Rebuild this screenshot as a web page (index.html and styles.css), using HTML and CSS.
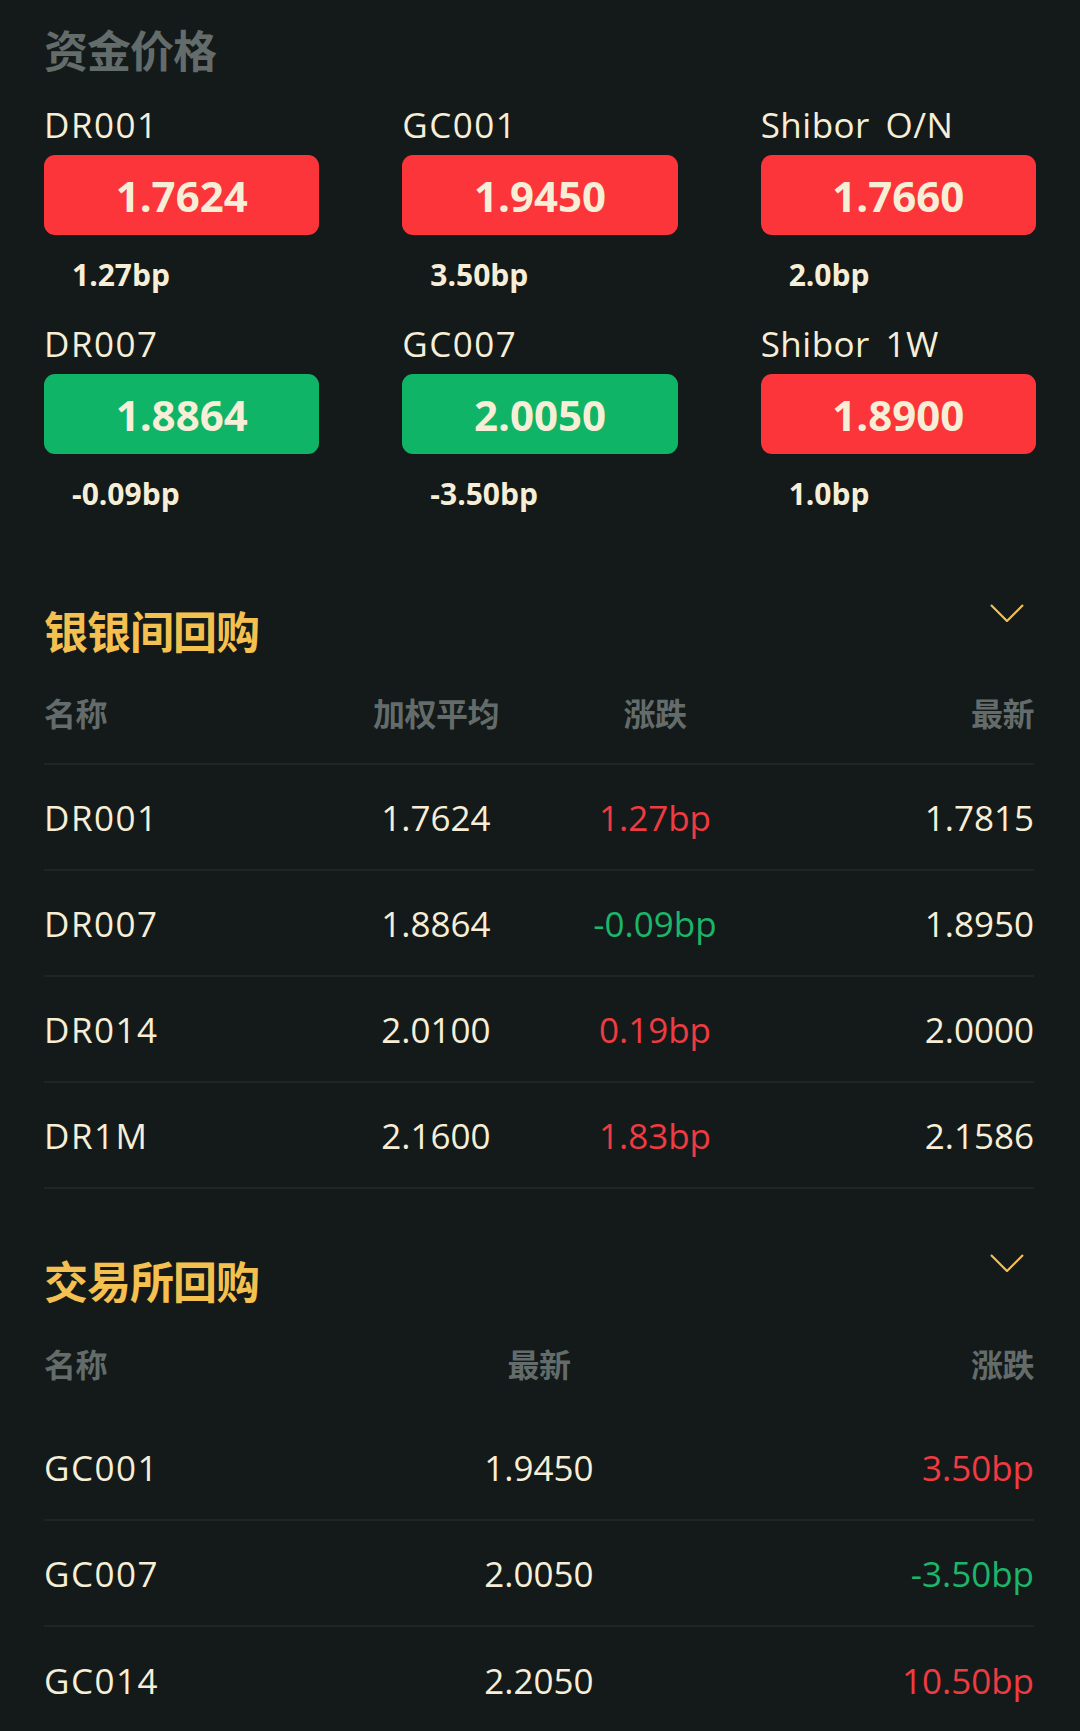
FILE: index.html
```html
<!DOCTYPE html>
<html lang="zh-CN">
<head>
    <meta charset="UTF-8">
    <meta name="viewport" content="width=device-width, initial-scale=1.0">
    <title>资金价格</title>
    <link rel="stylesheet" href="styles.css">
</head>
<body>
    <div class="page">
        <h2 class="section-title muted">资金价格</h2>

        <div class="rates">
            <div class="rate">
                <div class="rate-name">DR001</div>
                <div class="rate-box up">1.7624</div>
                <div class="rate-change">1.27bp</div>
            </div>
            <div class="rate">
                <div class="rate-name">GC001</div>
                <div class="rate-box up">1.9450</div>
                <div class="rate-change">3.50bp</div>
            </div>
            <div class="rate">
                <div class="rate-name wide">Shibor O/N</div>
                <div class="rate-box up">1.7660</div>
                <div class="rate-change">2.0bp</div>
            </div>
            <div class="rate">
                <div class="rate-name">DR007</div>
                <div class="rate-box down">1.8864</div>
                <div class="rate-change">-0.09bp</div>
            </div>
            <div class="rate">
                <div class="rate-name">GC007</div>
                <div class="rate-box down">2.0050</div>
                <div class="rate-change">-3.50bp</div>
            </div>
            <div class="rate">
                <div class="rate-name wide">Shibor 1W</div>
                <div class="rate-box up">1.8900</div>
                <div class="rate-change">1.0bp</div>
            </div>
        </div>

        <div class="section interbank">
            <div class="section-head">
                <h2 class="section-title gold">银银间回购</h2>
                <svg class="chevron" width="34" height="18" viewBox="0 0 34 18">
                    <polyline points="1,1 17,17 33,1" fill="none" stroke="#f2bf55" stroke-width="2.2"/>
                </svg>
            </div>
            <div class="table four">
                <div class="row head lined">
                    <span>名称</span><span class="c">加权平均</span><span class="c">涨跌</span><span class="r">最新</span>
                </div>
                <div class="row lined">
                    <span class="name">DR001</span><span class="c">1.7624</span><span class="c red">1.27bp</span><span class="r">1.7815</span>
                </div>
                <div class="row lined">
                    <span class="name">DR007</span><span class="c">1.8864</span><span class="c green">-0.09bp</span><span class="r">1.8950</span>
                </div>
                <div class="row lined">
                    <span class="name">DR014</span><span class="c">2.0100</span><span class="c red">0.19bp</span><span class="r">2.0000</span>
                </div>
                <div class="row lined">
                    <span class="name">DR1M</span><span class="c">2.1600</span><span class="c red">1.83bp</span><span class="r">2.1586</span>
                </div>
            </div>
        </div>

        <div class="section exchange">
            <div class="section-head">
                <h2 class="section-title gold">交易所回购</h2>
                <svg class="chevron" width="34" height="18" viewBox="0 0 34 18">
                    <polyline points="1,1 17,17 33,1" fill="none" stroke="#f2bf55" stroke-width="2.2"/>
                </svg>
            </div>
            <div class="table three">
                <div class="row head">
                    <span>名称</span><span class="c">最新</span><span class="r">涨跌</span>
                </div>
                <div class="row lined">
                    <span class="name">GC001</span><span class="c">1.9450</span><span class="r red">3.50bp</span>
                </div>
                <div class="row lined">
                    <span class="name">GC007</span><span class="c">2.0050</span><span class="r green">-3.50bp</span>
                </div>
                <div class="row">
                    <span class="name">GC014</span><span class="c">2.2050</span><span class="r red">10.50bp</span>
                </div>
            </div>
        </div>
    </div>
</body>
</html>
```

FILE: styles.css
```css
:root {
    --bg: #131a19;
    --text: #f7eed8;
    --muted: #646c6b;
    --gold: #f4c050;
    --red: #fb353a;
    --green: #0fb466;
    --red-text: #ef3b42;
    --green-text: #1cb56b;
    --line: #1e2625;
}

* {
    margin: 0;
    padding: 0;
    box-sizing: border-box;
}

body {
    background: var(--bg);
    color: var(--text);
    font-family: 'Open Sans', 'Noto Sans CJK SC', sans-serif;
    overflow: hidden;
}

.page {
    padding: 20px 46px 0 44px;
}

.section-title {
    font-family: 'Noto Sans CJK SC', sans-serif;
    font-size: 44px;
    font-weight: 700;
    line-height: 58px;
    letter-spacing: -1px;
}

.section-title.muted { color: var(--muted); }
.section-title.gold { color: var(--gold); line-height: 60px; }

/* top price cards */
.rates {
    display: grid;
    grid-template-columns: repeat(3, 1fr);
    column-gap: 83px;
    row-gap: 29px;
    margin-top: 27px;
    margin-right: -2px;
}

.rate-name {
    font-size: 35px;
    line-height: 40px;
    margin-bottom: 10px;
    letter-spacing: 1.5px;
}

.rate-name.wide { word-spacing: 6px; letter-spacing: 0.5px; }

.rate-box {
    height: 80px;
    border-radius: 11px;
    display: flex;
    align-items: center;
    justify-content: center;
    font-size: 42px;
    font-weight: 700;
}

.rate-box.up { background: var(--red); }
.rate-box.down { background: var(--green); }

.rate-change {
    font-size: 30px;
    font-weight: 700;
    line-height: 40px;
    margin-top: 20px;
    padding-left: 28px;
}

/* repo tables */
.section.interbank { margin-top: 86px; }
.section.exchange { margin-top: 61px; }

.section-head {
    display: flex;
    justify-content: space-between;
    align-items: flex-start;
}

.chevron {
    margin-top: 4px;
    margin-right: 10px;
}

.row {
    display: grid;
    align-items: center;
    height: 106px;
    font-size: 35px;
}

.row .name { letter-spacing: 1.5px; }

.row.lined { border-bottom: 2px solid var(--line); }

.row.head {
    height: 105px;
    font-family: 'Noto Sans CJK SC', sans-serif;
    font-size: 32px;
    font-weight: 700;
    color: var(--muted);
    letter-spacing: -0.5px;
}

.table.four .row { grid-template-columns: 292px 200px 238px 1fr; }
.table.three .row { grid-template-columns: 1fr 1fr 1fr; }

.row .c { text-align: center; }
.row .r { text-align: right; }

.red { color: var(--red-text); }
.green { color: var(--green-text); }
```
